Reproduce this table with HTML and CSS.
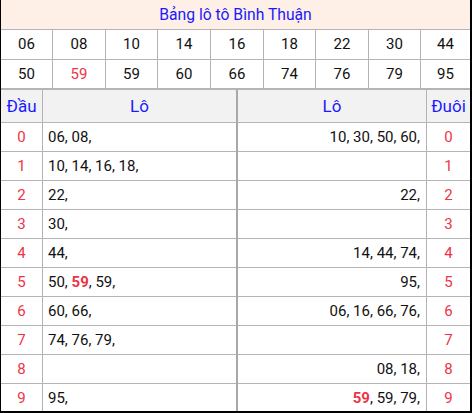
FILE: index.html
```html
<!DOCTYPE html>
<html>
<head>
<meta charset="utf-8">
<link rel="stylesheet" href="styles.css">
</head>
<body>
<div class="wrap">
  <div class="title">Bảng lô tô Bình Thuận</div>
  <div class="nums">
    <div class="n">06</div><div class="n">08</div><div class="n">10</div><div class="n">14</div><div class="n">16</div><div class="n">18</div><div class="n">22</div><div class="n">30</div><div class="n">44</div>
    <div class="n">50</div><div class="n red">59</div><div class="n">59</div><div class="n">60</div><div class="n">66</div><div class="n">74</div><div class="n">76</div><div class="n">79</div><div class="n">95</div>
  </div>
  <div class="lower">
    <div class="half left">
      <div class="h c1">Đầu</div><div class="h c2">Lô</div>
      <div class="d c1">0</div><div class="v c2">06, 08,</div>
      <div class="d c1">1</div><div class="v c2">10, 14, 16, 18,</div>
      <div class="d c1">2</div><div class="v c2">22,</div>
      <div class="d c1">3</div><div class="v c2">30,</div>
      <div class="d c1">4</div><div class="v c2">44,</div>
      <div class="d c1">5</div><div class="v c2">50, <b class="hot">59</b>, 59,</div>
      <div class="d c1">6</div><div class="v c2">60, 66,</div>
      <div class="d c1">7</div><div class="v c2">74, 76, 79,</div>
      <div class="d c1">8</div><div class="v c2"></div>
      <div class="d c1">9</div><div class="v c2">95,</div>
    </div>
    <div class="half right">
      <div class="h c2">Lô</div><div class="h c3">Đuôi</div>
      <div class="v c2 r">10, 30, 50, 60,</div><div class="d c3">0</div>
      <div class="v c2 r"></div><div class="d c3">1</div>
      <div class="v c2 r">22,</div><div class="d c3">2</div>
      <div class="v c2 r"></div><div class="d c3">3</div>
      <div class="v c2 r">14, 44, 74,</div><div class="d c3">4</div>
      <div class="v c2 r">95,</div><div class="d c3">5</div>
      <div class="v c2 r">06, 16, 66, 76,</div><div class="d c3">6</div>
      <div class="v c2 r"></div><div class="d c3">7</div>
      <div class="v c2 r">08, 18,</div><div class="d c3">8</div>
      <div class="v c2 r"><b class="hot">59</b>, 59, 79,</div><div class="d c3">9</div>
    </div>
  </div>
</div>
</body>
</html>
```
FILE: styles.css
```css
html, body {
  margin: 0;
  padding: 0;
  background: #fff;
}
body {
  font-family: Roboto, "Liberation Sans", Arial, sans-serif;
  font-size: 15px;
  color: #111;
}
.wrap {
  width: 469px;
  height: 411px;
  border-left: 1px solid #000;
  border-right: 2px solid #000;
  border-bottom: 2px solid #000;
  overflow: hidden;
}
.title {
  height: 29px;
  line-height: 29px;
  background: #fef0e6;
  color: #1a1aff;
  text-align: center;
  border-bottom: 1px solid #b4b4b4;
  font-size: 15.7px;
}
.nums {
  display: grid;
  grid-template-columns: 52px 53px 52px 53px 53px 52px 53px 52px 1fr;
  grid-auto-rows: 30px;
}
.n {
  border-right: 1px solid #b4b4b4;
  border-bottom: 1px solid #b4b4b4;
  text-align: center;
  line-height: 29px;
}
.n:nth-child(9n) {
  border-right: none;
}
.nums .n:nth-child(n+10) {
  border-bottom: 2px solid #b4b4b4;
  line-height: 28px;
}
.red {
  color: #ee3348;
}
.lower {
  display: flex;
}
.half {
  display: grid;
  grid-template-rows: 33px repeat(10, 29px);
}
.left {
  grid-template-columns: 42px 194px;
}
.right {
  grid-template-columns: 189px 1fr;
  flex: 1;
  border-left: 1px solid #a8a8a8;
}
.h, .d, .v {
  border-bottom: 1px solid #b4b4b4;
  line-height: 28px;
}
.h {
  background: #f2f2f2;
  color: #1a1aff;
  text-align: center;
  font-size: 17px;
  line-height: 32px;
}
.c1 {
  border-right: 1px solid #b4b4b4;
}
.left .c2 {
  border-right: 1px solid #a8a8a8;
}
.right .c2 {
  border-right: 1px solid #b4b4b4;
}
.d {
  color: #ee3348;
  text-align: center;
}
.v {
  padding-left: 5px;
  white-space: nowrap;
}
.v.r {
  padding-left: 0;
  padding-right: 6px;
  text-align: right;
}
.hot {
  color: #ee3348;
  font-weight: bold;
}
```
